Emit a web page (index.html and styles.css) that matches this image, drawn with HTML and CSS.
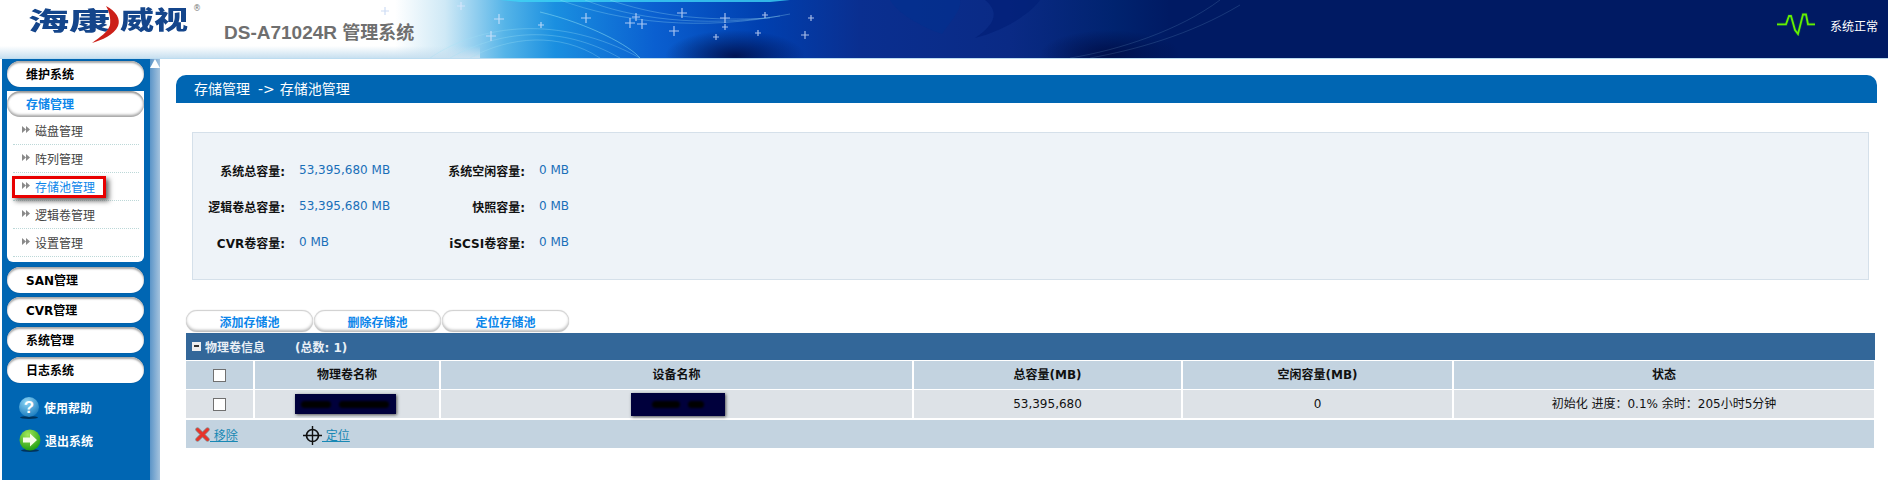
FILE: index.html
```html
<!DOCTYPE html>
<html>
<head>
  <title>DS-A71024R 管理系统</title>
  <meta charset="UTF-8" />
  <link rel="stylesheet" href="styles.css">
</head>
<body>

  <div class="top-bar">
    <svg class="top-art" width="1888" height="58" viewBox="0 0 1888 58">
      <defs>
        <radialGradient id="darkSpot">
          <stop offset="0" stop-color="#000c44" stop-opacity="0.85" />
          <stop offset="1" stop-color="#000c44" stop-opacity="0" />
        </radialGradient>
      </defs>
      <ellipse cx="735" cy="56" rx="70" ry="26" fill="url(#darkSpot)" />
      <ellipse cx="1110" cy="54" rx="70" ry="24" fill="url(#darkSpot)" />
      <path d="M500 0 H790 L770 2 H520 Z" fill="#3fd4f5" opacity="0.8" />
      <path d="M890 0 H960 C962 10 950 22 942 34 C925 28 900 16 890 0 Z" fill="#02308f" opacity="0.6" />
      <path d="M985 0 H1040 C1030 14 1005 30 975 38 C995 25 1000 12 985 0 Z" fill="#021f78" opacity="0.7" />
      <g fill="none" stroke="#9fe0f5" stroke-opacity="0.3">
        <path d="M430 58 C480 24 560 14 640 58" />
        <path d="M450 58 C500 30 560 24 620 58" />
        <path d="M470 58 C510 36 560 32 600 58" />
        <path d="M560 0 C620 22 700 32 790 14" />
        <path d="M585 0 C630 18 700 28 780 16" />
        <path d="M610 0 C650 14 700 22 770 18" />
        <path d="M1070 58 C1120 50 1180 30 1220 0" stroke-opacity="0.15" />
        <path d="M1090 58 C1135 50 1190 35 1240 5" stroke-opacity="0.15" />
      </g>
      <path d="M540 12 C590 24 630 46 640 58" fill="none" stroke="#7fd4f0" stroke-opacity="0.6" />
      <g stroke="#dfe8ff" stroke-width="1.2" stroke-opacity="0.75">
        <path d="M385 7v8M381 11h8" stroke="#bcd0f0" /><path d="M461 2v8M457 6h8" /><path d="M499 14v10M494 19h10" /><path d="M491 31v10M486 36h10" />
        <path d="M541 22v6M538 25h6" /><path d="M586 13v10M581 18h10" /><path d="M630 18v10M625 23h10" />
        <path d="M636 13v8M632 17h8" /><path d="M642 19v10M637 24h10" /><path d="M682 8v10M677 13h10" />
        <path d="M674 26v10M669 31h10" /><path d="M725 13v10M720 18h10" /><path d="M725 24v6M722 27h6" />
        <path d="M716 34v6M713 37h6" /><path d="M765 12v6M762 15h6" /><path d="M758 30v6M755 33h6" />
        <path d="M811 15v6M808 18h6" /><path d="M805 31v8M801 35h8" />
      </g>
    </svg>
    <div class="logo">
      <span class="logo-word">海康</span>
      <svg class="logo-swoosh" width="32" height="38" viewBox="0 0 32 38">
        <path d="M16 1 C26 6 31 14 28 21 C24 30 12 35 2 38 C10 32 18 27 20 20 C21 13 19 6 16 1 Z" fill="#cc2019" />
      </svg>
      <span class="logo-word logo-word-small">威视</span>
      <span class="logo-mark">®</span>
    </div>
    <div class="product-name">DS-A71024R <span class="product-cn">管理系统</span></div>
    <div class="status">
      <svg width="38" height="26" viewBox="0 0 38 26">
        <path d="M0 14.3h9l3-8.300 2 0 4 14 3 4 5-19.500 3 0 2 9.800h7" fill="none" stroke="#0b5a4a" stroke-width="3.400" opacity="0.55" />
        <path d="M0 14.3h9l3-8.300 2 0 4 14 3 4 5-19.500 3 0 2 9.800h7" fill="none" stroke="#66f000" stroke-width="1.800" />
      </svg>
      <span class="status-text">系统正常</span>
    </div>
  </div>

  <div class="page-body">
    <div class="side-bar">
      <div class="side-menu">
        <div class="menu-pill">维护系统</div>
        <div class="menu-group">
          <div class="menu-pill menu-pill-open">存储管理</div>
          <div class="sub-item"><span class="sub-arrow"></span>磁盘管理</div>
          <div class="sub-item"><span class="sub-arrow"></span>阵列管理</div>
          <div class="sub-item sub-item-active"><span class="sub-arrow"></span>存储池管理</div>
          <div class="sub-item"><span class="sub-arrow"></span>逻辑卷管理</div>
          <div class="sub-item"><span class="sub-arrow"></span>设置管理</div>
        </div>
        <div class="menu-pill">SAN管理</div>
        <div class="menu-pill">CVR管理</div>
        <div class="menu-pill">系统管理</div>
        <div class="menu-pill">日志系统</div>
        <div class="side-link side-link-help">
          <svg width="22" height="24" viewBox="0 0 22 24">
            <defs>
              <radialGradient id="helpFill" cx="0.4" cy="0.25" r="0.8">
                <stop offset="0" stop-color="#8fd6f5" />
                <stop offset="1" stop-color="#1679bd" />
              </radialGradient>
            </defs>
            <ellipse cx="11" cy="21.5" rx="9" ry="1.5" fill="#00335c" />
            <circle cx="11" cy="11" r="10" fill="url(#helpFill)" />
            <text x="11" y="17" class="help-mark">?</text>
          </svg>
          <span>使用帮助</span>
        </div>
        <div class="side-link side-link-exit">
          <svg width="22" height="24" viewBox="0 0 22 24">
            <defs>
              <radialGradient id="exitFill" cx="0.4" cy="0.25" r="0.8">
                <stop offset="0" stop-color="#a4e85a" />
                <stop offset="1" stop-color="#179a0e" />
              </radialGradient>
            </defs>
            <ellipse cx="11" cy="21.5" rx="9" ry="1.5" fill="#00335c" />
            <circle cx="11" cy="11" r="10.5" fill="url(#exitFill)" />
            <path d="M4 8.500h7V4.500l7 6.500-7 6.500v-4H4z" fill="#f4fbe8" />
          </svg>
          <span>退出系统</span>
        </div>
      </div>
      <div class="side-scroll"><span class="scroll-up"></span></div>
    </div>

    <div class="main">
      <div class="page-title">存储管理<span class="title-arrow">-&gt;</span>存储池管理</div>

      <div class="info-box">
        <div class="info-grid">
          <span class="info-label">系统总容量:</span><span class="info-value">53,395,680 MB</span>
          <span class="info-label">系统空闲容量:</span><span class="info-value">0 MB</span>
          <span class="info-label">逻辑卷总容量:</span><span class="info-value">53,395,680 MB</span>
          <span class="info-label">快照容量:</span><span class="info-value">0 MB</span>
          <span class="info-label">CVR卷容量:</span><span class="info-value">0 MB</span>
          <span class="info-label">iSCSI卷容量:</span><span class="info-value">0 MB</span>
        </div>
      </div>

      <div class="action-row">
        <button class="action-btn">添加存储池</button>
        <button class="action-btn">删除存储池</button>
        <button class="action-btn">定位存储池</button>
      </div>

      <div class="list-bar">
        <span class="collapse-icon"></span>
        <span class="list-name">物理卷信息</span>
        <span>(总数: 1)</span>
      </div>

      <table class="pv-table">
        <colgroup>
          <col class="col-check"><col class="col-name"><col class="col-device">
          <col class="col-total"><col class="col-free"><col class="col-state">
        </colgroup>
        <thead>
          <tr>
            <th><span class="check-box"></span></th>
            <th>物理卷名称</th>
            <th>设备名称</th>
            <th>总容量(MB)</th>
            <th>空闲容量(MB)</th>
            <th>状态</th>
          </tr>
        </thead>
        <tbody>
          <tr>
            <td><span class="check-box"></span></td>
            <td><span class="redact redact-name"><i></i><i></i></span></td>
            <td><span class="redact redact-device"><i></i><i></i></span></td>
            <td>53,395,680</td>
            <td>0</td>
            <td>初始化 进度：0.1% 余时：205小时5分钟</td>
          </tr>
        </tbody>
      </table>

      <div class="list-foot">
        <a class="foot-link foot-remove">
          <svg width="15" height="15" viewBox="0 0 15 15">
            <path d="M2.500 2.500 12.500 12.500M12.500 2.500 2.500 12.500" stroke="#8a8a8a" stroke-width="4.400" stroke-linecap="round" />
            <path d="M2.500 2.500 12.500 12.500M12.500 2.500 2.500 12.500" stroke="#e8342a" stroke-width="3" stroke-linecap="round" />
          </svg>
          <u>&nbsp;移除</u>
        </a>
        <a class="foot-link foot-locate">
          <svg width="19" height="19" viewBox="0 0 19 19">
            <circle cx="9.500" cy="9.500" r="6" fill="none" stroke="#111" stroke-width="1.700" />
            <path d="M9.500 0v19M0 9.500h19" stroke="#111" stroke-width="1.400" />
          </svg>
          <u>&nbsp;定位</u>
        </a>
      </div>
    </div>
  </div>

</body>
</html>
```

FILE: styles.css
```css
html, body {
  margin: 0;
  background-color: #fff;
}
body {
  width: 1888px;
  height: 480px;
  overflow: hidden;
  font-family: "DejaVu Sans", "Noto Sans CJK SC", sans-serif;
  font-size: 12px;
  color: #111;
}

/* top banner */
.top-bar {
  position: relative;
  display: flex;
  align-items: flex-start;
  height: 58px;
  border-bottom: 1px solid #bcdcf0;
  background:
    linear-gradient(180deg, rgba(200, 224, 240, 0) 46px, #c8e0f0 58px) 0 0 / 480px 58px no-repeat,
    linear-gradient(90deg, #fff 0, #fff 395px, #cfe9f6 445px, #55b4e8 505px, #1a8fe0 555px, #0a5fd0 655px, #0040b0 760px, #0a2f90 860px, #0a2a85 1010px, #00236f 1115px, #001a63 1170px);
}
.top-art {
  position: absolute;
  left: 0;
  top: 0;
}
.logo {
  position: relative;
  display: flex;
  align-items: flex-start;
  margin: 5px 0 0 28px;
  width: 196px;
  height: 38px;
}
.logo-word {
  font-family: "Noto Sans CJK SC", sans-serif;
  font-weight: 900;
  font-size: 41px;
  line-height: 28px;
  color: #14458b;
  transform: scaleY(0.6);
}
.logo-word-small {
  font-size: 34px;
  transform: scaleY(0.72);
}
.logo-swoosh {
  margin: 0 -2px 0 -20px;
  position: relative;
  z-index: 1;
}
.logo-mark {
  position: absolute;
  left: 165px;
  top: -1px;
  font-size: 8px;
  color: #777;
}
.product-name {
  position: relative;
  margin-top: 22px;
  font-family: "Liberation Sans", "Noto Sans CJK SC", sans-serif;
  font-size: 19px;
  font-weight: bold;
  line-height: 22px;
  color: #6f6f6f;
}
.product-cn {
  font-size: 18px;
}
.status {
  position: relative;
  display: flex;
  align-items: center;
  gap: 15px;
  margin: 8px 10px 0 auto;
  color: #fff;
}
.status-text {
  line-height: 22px;
  margin-top: 8px;
}

/* left side */
.page-body {
  display: flex;
  height: 421px;
}
.side-bar {
  display: flex;
  width: 158px;
  margin-left: 2px;
  background-color: #0066b3;
}
.side-menu {
  width: 148px;
  padding: 2px 6px 0 5px;
  box-sizing: border-box;
  display: flex;
  flex-direction: column;
  gap: 4px;
}
.side-scroll {
  width: 10px;
  background: linear-gradient(90deg, #5c95c8, #a5c3de);
}
.scroll-up {
  display: block;
  width: 0;
  height: 0;
  margin: 0 auto;
  border-left: 5px solid transparent;
  border-right: 5px solid transparent;
  border-bottom: 9px solid #fff;
}
.menu-pill {
  height: 26px;
  line-height: 28px;
  padding-left: 19px;
  box-sizing: border-box;
  border-radius: 13px;
  background-color: #fff;
  box-shadow: inset 0 2px 2px #a9a9a9, 0 0 1px #00417a;
  font-weight: bold;
  color: #000;
}
.menu-pill-open {
  color: #0c86ea;
  box-shadow: inset 0 -2px 3px #a0a0a0, inset 0 2px 2px #999;
}
.menu-group {
  height: 171px;
  margin-bottom: 1px;
  border-radius: 0 0 6px 6px;
  background-color: #fff;
}
.sub-item {
  position: relative;
  height: 28px;
  line-height: 30px;
  margin: 0 5px 0 6px;
  padding-left: 22px;
  box-sizing: border-box;
  border-bottom: 1px dotted #bcd8d8;
  color: #444;
}
.sub-arrow {
  position: absolute;
  left: 9px;
  top: 9px;
  width: 8px;
  height: 7px;
  background-color: #8a8a8a;
  clip-path: polygon(0 0, 4px 3.5px, 4px 0, 8px 3.5px, 4px 7px, 4px 3.5px, 0 7px);
}
.sub-item-active {
  color: #0c86ea;
}
.sub-item-active::after {
  content: "";
  position: absolute;
  left: -1px;
  top: 3px;
  width: 94px;
  height: 22px;
  box-sizing: border-box;
  border: 3px solid #e80000;
  box-shadow: 3px 3px 5px #666;
}
.side-link {
  display: flex;
  align-items: center;
  gap: 4px;
  height: 24px;
  margin-left: 11px;
  font-weight: bold;
  color: #fff;
}
.side-link span {
  margin-top: -2px;
}
.side-link-help {
  margin-top: 9px;
}
.side-link-exit {
  margin-top: 5px;
  margin-left: 12px;
}
.help-mark {
  font-family: "Liberation Sans", sans-serif;
  font-size: 17px;
  font-weight: bold;
  fill: #fff;
  text-anchor: middle;
}

/* content */
.main {
  width: 1728px;
  box-sizing: border-box;
  padding: 16px 11px 0 26px;
}
.page-title {
  height: 28px;
  margin-left: -10px;
  padding-left: 18px;
  box-sizing: border-box;
  border-radius: 10px 10px 0 0;
  background-color: #0066b3;
  color: #fff;
  font-size: 14px;
  line-height: 29px;
}
.title-arrow {
  margin: 0 5px 0 8px;
}
.info-box {
  height: 148px;
  margin: 29px 8px 0 6px;
  box-sizing: border-box;
  border: 1px solid #d5e0ea;
  background-color: #eef3f8;
}
.info-grid {
  display: grid;
  grid-template-columns: 92px 136px 104px auto;
  grid-auto-rows: 36px;
  justify-content: start;
  align-items: center;
  padding-top: 19px;
}
.info-label {
  font-weight: bold;
  text-align: right;
  white-space: nowrap;
}
.info-value {
  margin-left: 14px;
  color: #1a6fb8;
  white-space: nowrap;
}
.action-row {
  display: flex;
  gap: 1px;
  margin-top: 30px;
  height: 22px;
}
.action-btn {
  width: 127px;
  height: 22px;
  padding: 0;
  border: 0;
  border-radius: 11px;
  background-color: #fff;
  box-shadow: inset 0 -2px 3px #b9b9b9, inset 0 1px 1px #d0d0d0, 0 0 1px #bbb;
  font-family: inherit;
  font-size: 12px;
  font-weight: bold;
  color: #0c86ea;
}
.list-bar {
  display: flex;
  align-items: center;
  height: 27px;
  margin: 1px 2px 0 0;
  padding-left: 6px;
  background-color: #336799;
  color: #e9eff5;
  font-weight: bold;
}
.collapse-icon {
  position: relative;
  width: 9px;
  height: 9px;
  margin-right: 4px;
  background-color: #eee;
}
.collapse-icon::after {
  content: "";
  position: absolute;
  left: 2px;
  top: 3px;
  width: 5px;
  height: 2px;
  background-color: #333;
}
.list-name {
  width: 90px;
}
.pv-table {
  width: 1688px;
  margin-top: 1px;
  table-layout: fixed;
  border-collapse: collapse;
}
.col-check { width: 68px; }
.col-name { width: 186px; }
.col-device { width: 473px; }
.col-total { width: 269px; }
.col-free { width: 271px; }
.pv-table th,
.pv-table td {
  height: 28px;
  padding: 0;
  text-align: center;
  border-right: 2px solid #fff;
  border-bottom: 1px solid #fff;
  line-height: 16px;
}
.pv-table th {
  background-color: #c3d3e0;
  font-weight: bold;
}
.pv-table td {
  background-color: #dde2e7;
}
.pv-table th:last-child,
.pv-table td:last-child {
  border-right: 0;
}
.check-box {
  display: block;
  width: 11px;
  height: 11px;
  margin: 0 auto;
  border: 1px solid #707070;
  background-color: #fff;
}
.redact {
  display: inline-flex;
  align-items: center;
  justify-content: center;
  gap: 8px;
  vertical-align: middle;
  background-color: #00003c;
  box-shadow: 1px 1px 3px #555;
}
.redact i {
  display: block;
  height: 7px;
  border-radius: 4px;
  background-color: #000;
  filter: blur(1px);
}
.redact-name {
  width: 101px;
  height: 20px;
  margin-right: 4px;
}
.redact-name i:first-child { width: 30px; }
.redact-name i:last-child { width: 50px; }
.redact-device {
  width: 94px;
  height: 23px;
  margin-left: 3px;
}
.redact-device i:first-child { width: 28px; }
.redact-device i:last-child { width: 16px; }
.list-foot {
  display: flex;
  align-items: center;
  width: 1688px;
  height: 28px;
  margin-top: 1px;
  background-color: #c3d3e0;
  color: #1888b4;
}
.foot-link {
  display: flex;
  align-items: center;
}
.foot-remove {
  width: 108px;
  padding-left: 9px;
}
.foot-locate svg {
  margin-top: 3px;
}
```
